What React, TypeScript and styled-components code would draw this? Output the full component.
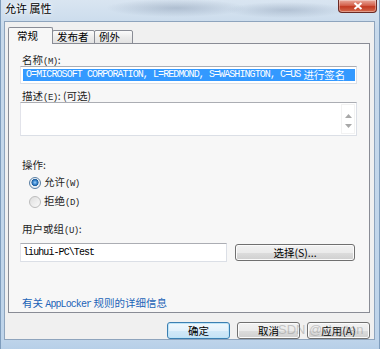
import styled, { createGlobalStyle } from "styled-components";

const GlobalStyle = createGlobalStyle`
  html, body {
    margin: 0;
    padding: 0;
  }
  body {
    width: 380px;
    height: 349px;
    overflow: hidden;
    font-family: "Noto Sans CJK SC", "Noto Sans", sans-serif;
    font-size: 10.5px;
    color: #1e1e1e;
  }
`;

const Window = styled.div`
  position: relative;
  width: 380px;
  height: 349px;
  display: flex;
  flex-direction: column;
  box-sizing: border-box;
  border-left: 1px solid #7f9dbd;
  border-right: 1px solid #7f9dbd;
  background:
    radial-gradient(ellipse 70px 9px at 175px 8px, rgba(80, 100, 130, 0.28), transparent),
    radial-gradient(ellipse 60px 8px at 285px 10px, rgba(80, 100, 130, 0.25), transparent),
    linear-gradient(to bottom, #d9e5f1, #c7d9eb 30px, #bed4ea 340px, #b7cfe8);
`;

const TitleBar = styled.div`
  height: 21px;
  display: flex;
  justify-content: space-between;
  align-items: flex-start;
`;

const Title = styled.span`
  padding: 2px 0 0 4px;
  font-size: 11px;
  line-height: 13px;
  color: #000;
  text-shadow: 0 0 6px #fff, 0 0 3px #fff;
`;

const CloseButton = styled.div`
  width: 39px;
  height: 13px;
  margin-right: 2px;
  box-sizing: border-box;
  border: 1px solid #6b2a24;
  border-top: none;
  border-radius: 0 0 4px 4px;
  background: linear-gradient(to bottom, #e9a99b, #d4624d 45%, #c23a22 55%, #d56b4e);
  box-shadow: inset 0 0 0 1px rgba(255, 255, 255, 0.35);
  display: flex;
  align-items: center;
  justify-content: center;
`;

const Client = styled.div`
  flex: 1;
  margin: 0 4px 9px 3px;
  box-sizing: border-box;
  border: 1px solid #8ea4bd;
  background: #f0f0f0;
  padding: 6px 4px 0 3px;
  display: flex;
  flex-direction: column;
`;

const TabStrip = styled.div`
  display: flex;
  align-items: flex-end;
  height: 16px;
  margin-bottom: -1px;
  position: relative;
  z-index: 1;
`;

const Tab = styled.div<{ $active?: boolean; $w: number }>`
  width: ${(p) => p.$w}px;
  height: ${(p) => (p.$active ? 17 : 14)}px;
  box-sizing: border-box;
  border: 1px solid #898c95;
  border-bottom: ${(p) => (p.$active ? "none" : "1px solid #898c95")};
  margin-left: ${(p) => (p.$active ? 0 : -1)}px;
  border-radius: 2px 2px 0 0;
  background: ${(p) =>
    p.$active ? "#f7f7f7" : "linear-gradient(to bottom, #fbfbfb, #ececec 50%, #e2e2e2)"};
  display: flex;
  align-items: center;
  padding-left: ${(p) => (p.$active ? 8 : 4)}px;
  padding-bottom: ${(p) => (p.$active ? 1 : 0)}px;
  font-size: 10.5px;
  line-height: 12px;
  color: #000;
`;

const Panel = styled.div`
  height: 270px;
  box-sizing: border-box;
  border: 1px solid #898c95;
  background: #f7f7f7;
  padding: 10px 12px 0 11px;
  display: flex;
  flex-direction: column;
`;

const Label = styled.div<{ $mt?: number }>`
  margin-top: ${(p) => p.$mt ?? 0}px;
  padding-left: 2px;
  height: 12px;
  line-height: 12px;
  white-space: nowrap;
`;

const Key = styled.span`
  font-family: "Liberation Mono", monospace;
  font-size: 9px;
  letter-spacing: -0.5px;
`;

const Field = styled.div<{ $h: number; $w?: number }>`
  height: ${(p) => p.$h}px;
  width: ${(p) => (p.$w ? `${p.$w}px` : "auto")};
  box-sizing: border-box;
  border: 1px solid #dbdfe6;
  border-top-color: #abadb3;
  border-left-color: #e2e3ea;
  background: #fff;
  display: flex;
  overflow: hidden;
`;

const Selection = styled.div`
  margin: 2px 1px 2px 2px;
  flex: 1;
  background: #3399ff;
  color: #fff;
  display: flex;
  align-items: center;
  padding-left: 3px;
  white-space: nowrap;
`;

const MonoText = styled.span`
  font-family: "Liberation Mono", monospace;
  font-size: 10px;
  letter-spacing: -0.92px;
  line-height: 12px;
`;

const CjkText = styled.span`
  margin-left: 3px;
  font-family: "Noto Sans CJK SC", sans-serif;
  font-size: 10.5px;
  line-height: 12px;
`;

const TextArea = styled.div`
  flex: 1;
`;

const ScrollBar = styled.div`
  width: 14px;
  margin: 1px 1px 1px 0;
  display: flex;
  flex-direction: column;
  justify-content: space-between;
  align-items: center;
  padding: 9px 0 5px;
  box-sizing: border-box;
  border: 1px solid #f2f2f2;
`;

const RadioRow = styled.div<{ $mt: number }>`
  margin-top: ${(p) => p.$mt}px;
  margin-left: 9px;
  display: flex;
  align-items: center;
  gap: 3px;
  height: 12px;
  line-height: 12px;
`;

const RadioCircle = styled.span<{ $checked?: boolean }>`
  width: 12px;
  height: 12px;
  box-sizing: border-box;
  border-radius: 50%;
  border: 1px solid ${(p) => (p.$checked ? "#5a7fa3" : "#bcbcbc")};
  background: ${(p) =>
    p.$checked
      ? "radial-gradient(circle at 50% 45%, #9fd0f7 0, #3a86cf 2px, #1d5d9c 3.3px, #e8eef4 3.8px, #f6f8fa 100%)"
      : "linear-gradient(135deg, #dedede, #fafafa)"};
`;

const Row = styled.div<{ $mt: number }>`
  margin-top: ${(p) => p.$mt}px;
  display: flex;
  align-items: center;
  gap: 8px;
`;

const UserText = styled.div`
  padding-left: 2px;
  display: flex;
  align-items: center;
  color: #000;
`;

const Button = styled.div<{ $w: number; $default?: boolean }>`
  width: ${(p) => p.$w}px;
  height: 17px;
  box-sizing: border-box;
  border: 1px solid ${(p) => (p.$default ? "#3c7fb1" : "#707070")};
  border-radius: 3px;
  background: ${(p) =>
    p.$default
      ? "linear-gradient(to bottom, #f0f8fd, #e3f1fb 50%, #d2e9f8 51%, #c6e2f5)"
      : "linear-gradient(to bottom, #f2f2f2, #ebebeb 50%, #dddddd 51%, #cfcfcf)"};
  box-shadow: inset 0 0 0 1px ${(p) => (p.$default ? "#bde4f8" : "#fbfbfb")};
  display: flex;
  align-items: center;
  justify-content: center;
  font-size: 10.5px;
  line-height: 12px;
  color: #000;
`;

const Link = styled.div<{ $mt: number }>`
  margin-top: ${(p) => p.$mt}px;
  padding-left: 2px;
  color: #1c64b8;
  line-height: 12px;
  white-space: nowrap;
`;

const ButtonRow = styled.div`
  margin-top: 9px;
  display: flex;
  justify-content: flex-end;
  gap: 7px;
`;

const Watermark = styled.div`
  position: absolute;
  left: 277px;
  top: 322px;
  font-family: "Liberation Sans", sans-serif;
  font-size: 13px;
  color: rgba(150, 150, 150, 0.5);
  white-space: nowrap;
  pointer-events: none;
`;

const Arrow = ({ up }: { up?: boolean }) => (
  <svg width="7" height="4" viewBox="0 0 7 4">
    <path d={up ? "M0 4 L3.5 0 L7 4 Z" : "M0 0 L3.5 4 L7 0 Z"} fill="#a8a8a8" />
  </svg>
);

export default function App() {
  return (
    <>
      <GlobalStyle />
      <Window>
        <TitleBar>
          <Title>允许 属性</Title>
          <CloseButton>
            <svg width="10" height="8" viewBox="0 0 10 8">
              <path d="M1.5 1 L8.5 7 M8.5 1 L1.5 7" stroke="#fff" strokeWidth="2" />
            </svg>
          </CloseButton>
        </TitleBar>
        <Client>
          <TabStrip>
            <Tab $active $w={45}>常规</Tab>
            <Tab $w={43}>发布者</Tab>
            <Tab $w={39}>例外</Tab>
          </TabStrip>
          <Panel>
            <Label>
              名称<Key>(M)</Key>:
            </Label>
            <Field $h={18}>
              <Selection>
                <MonoText>O=MICROSOFT CORPORATION, L=REDMOND, S=WASHINGTON, C=US</MonoText>
                <CjkText>进行签名</CjkText>
              </Selection>
            </Field>
            <Label $mt={6}>
              描述<Key>(E)</Key>: (可选)
            </Label>
            <Field $h={34}>
              <TextArea />
              <ScrollBar>
                <Arrow up />
                <Arrow />
              </ScrollBar>
            </Field>
            <Label $mt={23}>操作:</Label>
            <RadioRow $mt={6}>
              <RadioCircle $checked />
              <span>
                允许<Key>(W)</Key>
              </span>
            </RadioRow>
            <RadioRow $mt={7}>
              <RadioCircle />
              <span>
                拒绝<Key>(D)</Key>
              </span>
            </RadioRow>
            <Label $mt={15}>
              用户或组<Key>(U)</Key>:
            </Label>
            <Row $mt={8}>
              <Field $h={19} $w={207}>
                <UserText>
                  <MonoText>liuhui-PC\Test</MonoText>
                </UserText>
              </Field>
              <Button $w={120}>选择(S)...</Button>
            </Row>
            <Link $mt={35}>
              有关 <MonoText>AppLocker</MonoText> 规则的详细信息
            </Link>
          </Panel>
          <ButtonRow>
            <Button $w={63} $default>确定</Button>
            <Button $w={63}>取消</Button>
            <Button $w={63}>应用(A)</Button>
          </ButtonRow>
        </Client>
        <Watermark>SDN @vlvpten</Watermark>
      </Window>
    </>
  );
}
